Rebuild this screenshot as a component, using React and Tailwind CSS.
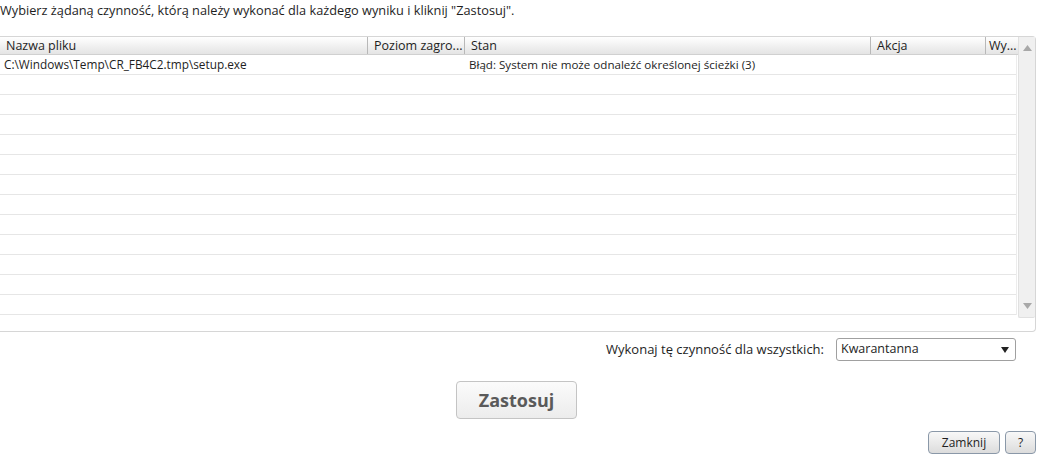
import React from "react";

const cols = [
  { label: "Nazwa pliku", w: 368 },
  { label: "Poziom zagro...", w: 97 },
  { label: "Stan", w: 406 },
  { label: "Akcja", w: 115 },
  { label: "Wy...", w: 32 },
];

export default function App() {
  const rows = Array.from({ length: 13 });
  return (
    <div className="w-[1040px] h-[471px] bg-white font-['Open_Sans',sans-serif] text-[12px] text-[#1e1e1e] overflow-hidden">
      <div className="h-[36px] pt-[1px] leading-[18px] text-[12.75px]">
        Wybierz żądaną czynność, którą należy wykonać dla każdego wyniku i kliknij "Zastosuj".
      </div>
      <div className="w-[1036px] h-[296px] border-t border-r border-b border-[#d6d6d6] rounded-r-[4px] flex">
        <div className="w-[1018px] flex flex-col">
          <div className="h-[18px] flex bg-gradient-to-b from-[#ffffff] to-[#e4e4e4] border-b border-[#d0d0d0] leading-[17px] text-[12.5px]">
            {cols.map((c, i) => (
              <div
                key={i}
                style={{ width: c.w }}
                className={
                  "shrink-0 overflow-hidden whitespace-nowrap " +
                  (i < cols.length - 1 ? "pl-[6px] border-r border-[#b8b8b8]" : "pl-[3px]")
                }
              >
                {c.label}
              </div>
            ))}
          </div>
          <div className="w-[1017px] border-r border-[#ececec] text-[11.8px]">
            {rows.map((_, i) => (
              <div key={i} className="h-[20px] border-b border-[#e6e6e6] flex leading-[19px]">
                {i === 0 && (
                  <>
                    <div className="w-[465px] shrink-0 pl-[4px]">
                      C:\Windows\Temp\CR_FB4C2.tmp\setup.exe
                    </div>
                    <div className="pl-[4px] text-[11.6px]">Błąd: System nie może odnaleźć określonej ścieżki (3)</div>
                  </>
                )}
              </div>
            ))}
          </div>
        </div>
        <div className="w-[17px] h-[281px] bg-[#f0f0f0] border-l border-[#e0e0e0] flex flex-col justify-between items-center border-b rounded-b-[2px]">
          <svg width="9" height="6" viewBox="0 0 9 6" className="mt-[8px]">
            <path d="M0 6 L4.5 0 L9 6 Z" fill="#a8a8a8" />
          </svg>
          <svg width="9" height="6" viewBox="0 0 9 6" className="mb-[8px]">
            <path d="M0 0 L4.5 6 L9 0 Z" fill="#a8a8a8" />
          </svg>
        </div>
      </div>
      <div className="w-[1016px] flex justify-end items-center mt-[6px]">
        <span className="mr-[12px] text-[13px]">Wykonaj tę czynność dla wszystkich:</span>
        <div className="w-[180px] h-[23px] border border-[#a0a0a0] rounded-[3px] flex items-center justify-between pl-[4px] pr-[6px] bg-white text-[12.5px]">
          <span>Kwarantanna</span>
          <svg width="8" height="6" viewBox="0 0 8 6">
            <path d="M0 0 L4 6 L8 0 Z" fill="#222" />
          </svg>
        </div>
      </div>
      <div className="flex mt-[20px] pl-[456px]">
        <button className="w-[121px] h-[38px] border border-[#c4c4c4] rounded-[4px] bg-gradient-to-b from-[#fbfbfb] to-[#ececec] text-[18px] font-bold text-[#5a5a5a] leading-none">
          Zastosuj
        </button>
      </div>
      <div className="flex justify-end gap-[5px] w-[1036px] mt-[12px]">
        <button className="w-[72px] h-[23px] border border-[#8a98a8] rounded-[4px] bg-gradient-to-b from-[#f8f8f8] to-[#dcdcdc] text-[12px] text-[#1e1e1e] leading-none">
          Zamknij
        </button>
        <button className="w-[31px] h-[23px] border border-[#8a98a8] rounded-[4px] bg-gradient-to-b from-[#f8f8f8] to-[#dcdcdc] text-[12px] text-[#1e1e1e] leading-none">
          ?
        </button>
      </div>
    </div>
  );
}
